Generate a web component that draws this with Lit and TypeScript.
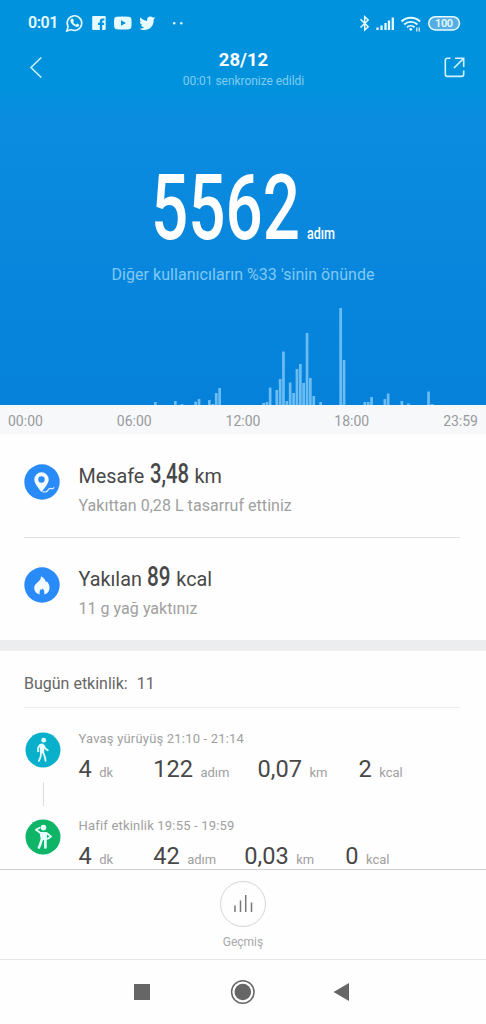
import { LitElement, html, css, svg } from 'lit';
import { customElement, property } from 'lit/decorators.js';

// [x, height] of each ten-minute slot that has steps
const STEP_BARS: [number, number][] = [
  [154, 3], [174, 4], [180.7, 1], [194.3, 3.3], [197.7, 6], [208, 5],
  [211.5, 1], [214.9, 12], [218.3, 17], [262.3, 2], [265.6, 3], [268.8, 17.5],
  [275.4, 15], [278.8, 26], [282.1, 53.5], [285.5, 4], [288.8, 22.5],
  [292.2, 12], [295.6, 36], [299, 41], [302.3, 22], [305.7, 72], [309, 27],
  [312.4, 9], [319.3, 3], [339.3, 97], [342.7, 45], [363.5, 3], [366.9, 3],
  [370.2, 8], [383.5, 6], [386.8, 11.5], [400.5, 4], [407, 1.5],
  [427.2, 13.5], [430.7, 1],
];

interface Activity {
  kind: 'walk' | 'light';
  title: string;
  values: [string, string][];
}

const ACTIVITIES: Activity[] = [
  {
    kind: 'walk',
    title: 'Yavaş yürüyüş 21:10 - 21:14',
    values: [['4', 'dk'], ['122', 'adım'], ['0,07', 'km'], ['2', 'kcal']],
  },
  {
    kind: 'light',
    title: 'Hafif etkinlik 19:55 - 19:59',
    values: [['4', 'dk'], ['42', 'adım'], ['0,03', 'km'], ['0', 'kcal']],
  },
];

@customElement('condensed-text')
export class CondensedText extends LitElement {
  @property() text = '';
  @property({ type: Number }) size = 27;
  @property({ type: Number }) width = 40;

  static styles = css`
    :host {
      display: inline-block;
      line-height: 0;
    }

    svg {
      display: block;
      overflow: visible;
    }

    text {
      font-family: Roboto, 'Liberation Sans', sans-serif;
      fill: currentColor;
    }
  `;

  render() {
    const cap = Math.round(this.size * 0.711);
    return html`
      <svg width=${this.width} height=${cap}>
        <text
          x="0"
          y=${cap}
          font-size=${this.size}
          textLength=${this.width}
          lengthAdjust="spacingAndGlyphs"
        >${this.text}</text>
      </svg>
    `;
  }
}

@customElement('status-bar')
export class StatusBar extends LitElement {
  static styles = css`
    :host {
      display: flex;
      justify-content: space-between;
      height: 46px;
      padding: 0 25px 0 28px;
      color: #e6fbff;
      font-family: Roboto, sans-serif;
      font-weight: 600;
    }

    .side {
      display: flex;
      align-items: center;
    }

    .time {
      width: 37px;
      font-size: 16px;
      line-height: 46px;
      letter-spacing: -0.5px;
    }

    svg {
      display: block;
    }
  `;

  render() {
    return html`
      <div class="side">
        <span class="time">0:01</span>
        <svg width="122" height="24" viewBox="65 11 122 24" fill="currentColor">
          <path
            d="M66.8 31.1l1.3-4.4a7.3 7.3 0 1 1 3 2.9z"
            fill="none"
            stroke="currentColor"
            stroke-width="1.6"
          />
          <path d="M71.4 18.8l1.4-.2 1.2 2.4-.8 1.2c.7 1.3 1.6 2 2.7 2.5l1.2-1.1 2.2 1.1c.1 1.5-1.2 2.2-2.3 2.2-3.4-.5-6.6-3.7-6.7-6.3 0-.8.5-1.4 1.1-1.8z" />
          <path
            fill-rule="evenodd"
            d="M93.2 16h11.5q1 0 1 1v12q0 1-1 1h-2.5v-5h1.7l.3-2.2h-2v-1.3q0-1 1.1-1h1.1v-2.1h-1.9q-2.7 0-2.7 2.9v1.5h-1.8v2.2h1.8v5h-6.6q-1 0-1-1v-12q0-1 1-1z"
          />
          <path
            fill-rule="evenodd"
            d="M116.5 16.8q6.3-.5 12.6 0q2.2.2 2.3 2.3q.4 3.9 0 7.8q-.2 2-2.3 2.3q-6.3.6-12.6 0q-2.1-.2-2.3-2.3q-.4-3.9 0-7.8q.1-2.1 2.3-2.3zM121 20.2v5.6l5-2.8z"
          />
          <path d="M155.2 17.6l-1.5 2c.2 6.5-4.2 10.5-9.3 10.5-1.9 0-3.7-.5-5.1-1.5 1.9.2 3.6-.3 4.9-1.3-1.5 0-2.7-1-3.1-2.3h1.4c-1.6-.4-2.6-1.7-2.6-3.4l1.4.4c-1.4-1.1-1.8-2.9-.9-4.5 1.7 2 4 3.2 6.7 3.4-.5-2.5 1-4.4 3.2-4.4.9 0 1.8.4 2.4 1z" />
          <circle cx="174.2" cy="23.2" r="1.2" />
          <circle cx="181.3" cy="23.2" r="1.2" />
        </svg>
      </div>
      <div class="side">
        <svg width="102" height="24" viewBox="359 11 102 24" fill="none" stroke="currentColor">
          <path d="M360.5 19.3l7.7 7.5-3.5 3.2v-13.2l3.5 3.2-7.7 7.5" stroke-width="1.5" />
          <path
            d="M377.5 30v-2.5M381.5 30v-4.5M385.5 30v-7M389 30v-9.5M392.8 30v-12.5"
            stroke-width="2.3"
          />
          <path
            d="M401.5 21.5a13.5 13.5 0 0 1 18.6 0M404.2 24.5a9.5 9.5 0 0 1 13.2 0M407 27.3a5.7 5.7 0 0 1 7.6 0"
            stroke-width="1.9"
          />
          <circle cx="410.8" cy="29.3" r="1.4" fill="currentColor" stroke="none" />
          <path d="M416.8 27.5v4M419.2 27.5v4" stroke-width="1.2" />
          <rect x="428.7" y="16.7" width="30.8" height="13.2" rx="6.6" fill="#56ade4" stroke-width="1.5" />
          <text x="444.1" y="27.3" fill="currentColor" stroke="none" font-size="11" text-anchor="middle" textLength="18">100</text>
        </svg>
      </div>
    `;
  }
}

@customElement('step-hero')
export class StepHero extends LitElement {
  static styles = css`
    :host {
      display: flex;
      flex-direction: column;
      height: 405px;
      background: linear-gradient(#0092dc 0, #0092dc 85px, #0b8ce0 120px, #0581da 405px);
      color: #fff;
      font-family: Roboto, sans-serif;
    }

    .bar {
      display: flex;
      justify-content: space-between;
      height: 50px;
      padding: 0 20px 0 29px;
    }

    .bar svg {
      margin-top: 10px;
    }

    .titles {
      padding-top: 1px;
      text-align: center;
    }

    .date {
      font-size: 18.5px;
      font-weight: 700;
      line-height: 26px;
    }

    .sync {
      font-size: 12px;
      line-height: 16px;
      letter-spacing: -0.04px;
      color: #80cdf1;
    }

    .steps {
      display: flex;
      align-items: flex-end;
      gap: 7px;
      height: 143px;
      padding-left: 151px;
      font-weight: 500;
    }

    .rank {
      margin-top: 24px;
      text-align: center;
      font-size: 16px;
      line-height: 24px;
      letter-spacing: 0.05px;
      color: #80c9f4;
    }

    .chart {
      display: block;
      margin-top: auto;
      fill: #6abcf2;
    }
  `;

  render() {
    return html`
      <status-bar></status-bar>
      <div class="bar">
        <svg width="14" height="24" fill="none" stroke="#d2f3fc" stroke-width="1.5">
          <path d="M12.3 1.5L2 11.5l10.3 10" />
        </svg>
        <div class="titles">
          <div class="date">28/12</div>
          <div class="sync">00:01 senkronize edildi</div>
        </div>
        <svg width="22" height="24" fill="none" stroke="#d2f3fc" stroke-width="1.6">
          <path d="M6.5 2.3H3.5Q1.3 2.3 1.3 4.5v13.7q0 2.2 2.2 2.2h14q2.2 0 2.2-2.2V14.5" />
          <path d="M11 2.3h8.7V11M19.5 2.5L10 12" />
        </svg>
      </div>
      <div class="steps">
        <condensed-text text="5562" size="91" width="149"></condensed-text>
        <condensed-text text="adım" size="17" width="28"></condensed-text>
      </div>
      <div class="rank">Diğer kullanıcıların %33 'sinin önünde</div>
      <svg class="chart" width="486" height="98">
        ${STEP_BARS.map(([x, h]) => svg`<rect x=${x} y=${98 - h} width="2.7" height=${h} />`)}
      </svg>
    `;
  }
}

@customElement('activity-item')
export class ActivityItem extends LitElement {
  @property({ attribute: false }) activity!: Activity;

  static styles = css`
    :host {
      display: flex;
      height: 86.5px;
      font-family: Roboto, sans-serif;
    }

    .rail {
      display: flex;
      flex-direction: column;
      align-items: center;
      gap: 14px;
      width: 36px;
      margin-left: 25px;
      padding-top: 1px;
    }

    .rail svg {
      flex: none;
    }

    .link {
      width: 1px;
      height: 24px;
      background: #dcdcdc;
    }

    .body {
      padding-left: 17.5px;
    }

    .title {
      font-size: 13px;
      line-height: 16px;
      color: #a0a0a0;
      letter-spacing: 0.19px;
    }

    .values {
      display: flex;
      height: 42px;
      line-height: 42px;
      margin-top: 1px;
    }

    .value {
      white-space: nowrap;
      margin-right: 40px;
    }

    .value:nth-child(2) {
      margin-right: 28px;
    }

    .value:nth-child(3) {
      margin-right: 31px;
    }

    .number {
      font-size: 23.6px;
      color: #484848;
      margin-right: 7.5px;
    }

    .unit {
      font-size: 13px;
      color: #a0a0a0;
    }
  `;

  private _icon() {
    if (this.activity.kind === 'walk') {
      return svg`
        <circle cx="18" cy="18" r="17.5" fill="#08b0cb" stroke="none" />
        <circle cx="18.7" cy="8.2" r="2.4" fill="#e8ffff" stroke="none" />
        <path d="M17 13.8v5.4" stroke-width="4.4" />
        <path d="M15.2 12.7l-2.2 3.3v3.3M18.8 13.7l1.7 3 2.3 1.5M16 20.5l-.3 4-1.8 4.3M18.3 20.5l1.4 4 .9 4.3" stroke-width="1.8" />
      `;
    }
    return svg`
      <circle cx="18" cy="18" r="17.5" fill="#0eb566" stroke="none" />
      <circle cx="18.5" cy="8.6" r="2.8" fill="#e8ffff" stroke="none" />
      <path d="M15.7 14h5.3v6h-4.3z" fill="#e8ffff" stroke-width="2" />
      <path d="M15.5 14l-4.6-3.2 3.8-2.1M21.5 14l4.5 3.5-3.2 2.2" stroke-width="1.8" />
      <path d="M16.6 21l-1.2 4-1.5 3.5M20.4 21v7.5" stroke-width="2.6" />
    `;
  }

  render() {
    return html`
      <div class="rail">
        <svg width="36" height="36" fill="none" stroke="#e8ffff" stroke-linecap="round" stroke-linejoin="round">
          ${this._icon()}
        </svg>
        <div class="link"></div>
      </div>
      <div class="body">
        <div class="title">${this.activity.title}</div>
        <div class="values">
          ${this.activity.values.map(
            ([value, unit]) => html`
              <div class="value"><span class="number">${value}</span><span class="unit">${unit}</span></div>
            `
          )}
        </div>
      </div>
    `;
  }
}

@customElement('app-root')
export class AppRoot extends LitElement {
  static styles = css`
    :host {
      display: flex;
      flex-direction: column;
      height: 1024px;
      overflow: hidden;
      background: #fefefe;
      font-family: Roboto, sans-serif;
      color: #484848;
    }

    svg {
      display: block;
      flex: none;
    }

    .axis {
      display: flex;
      justify-content: space-between;
      flex: none;
      height: 29px;
      padding: 0 8px;
      background: #f6f8fa;
      color: #999b9e;
      font-size: 14px;
      line-height: 32px;
    }

    .stats {
      padding: 0 26px 0 24px;
    }

    .stat {
      display: flex;
      gap: 18.5px;
      height: 102px;
      padding-top: 1px;
    }

    .stat + .stat {
      padding-top: 0;
      border-top: 1px solid #e2e2e2;
    }

    .stat svg {
      margin-top: 29px;
    }

    .headline {
      display: flex;
      align-items: baseline;
      gap: 5.5px;
      margin-top: 26px;
      height: 32px;
      font-size: 19.8px;
      line-height: 32px;
    }

    .headline condensed-text {
      font-weight: 500;
    }

    .note {
      margin-top: 1px;
      font-size: 16px;
      line-height: 24px;
      letter-spacing: 0.04px;
      color: #a0a0a0;
    }

    .divider {
      flex: none;
      height: 11px;
      background: #ecedef;
    }

    .count {
      flex: none;
      display: flex;
      gap: 9px;
      height: 56px;
      margin: 0 26px 0 24px;
      border-bottom: 1px solid #ebebeb;
      font-size: 16px;
      line-height: 66px;
      color: #666;
    }

    .activities {
      flex: 1;
      min-height: 0;
      overflow: hidden;
      padding-top: 23px;
    }

    .history {
      flex: none;
      display: flex;
      flex-direction: column;
      align-items: center;
      height: 78px;
      padding-top: 11px;
      border-top: 1px solid #d2d2d2;
      font-size: 12px;
      line-height: 31px;
      color: #a8a8a8;
    }

    .nav {
      flex: none;
      height: 64px;
      border-top: 1px solid #e6e6e6;
    }
  `;

  render() {
    return html`
      <step-hero></step-hero>
      <div class="axis">
        <span>00:00</span><span>06:00</span><span>12:00</span><span>18:00</span><span>23:59</span>
      </div>
      <div class="stats">
        <div class="stat">
          <svg width="36" height="36">
            <circle cx="18" cy="18" r="17.7" fill="#298bf8" />
            <path
              fill="#f4fbff"
              fill-rule="evenodd"
              d="M17.5 28C13.5 23 10.3 19.3 10.3 15.5a7.2 7.2 0 0 1 14.4 0c0 3.8-3.2 7.5-7.2 12.5zM17.5 12.3a3.2 3.2 0 1 0 0 6.4 3.2 3.2 0 0 0 0-6.4z"
            />
            <path
              d="M18.5 27.7c3 .8 4.5 0 5.5-1.6s1.8-2.2 3-1.5 2.3-.1 3.2-1.2"
              fill="none"
              stroke="#e3f3ff"
              stroke-width="1.2"
            />
          </svg>
          <div>
            <div class="headline">
              <span>Mesafe</span>
              <condensed-text text="3,48" size="27" width="39"></condensed-text>
              <span>km</span>
            </div>
            <div class="note">Yakıttan 0,28 L tasarruf ettiniz</div>
          </div>
        </div>
        <div class="stat">
          <svg width="36" height="36">
            <circle cx="18" cy="18" r="17.7" fill="#298bf8" />
            <path
              fill="#f4fbff"
              d="M17 9.2c3 1.8 4.5 3.6 5 6.3l.9-1.2c1.9 2.4 2.9 4.7 2.6 7.1-.3 3.2-2.5 5.4-5.3 6.2.5-2.3 0-4.3-1.5-6l-1 1.5-.8-1.1c-1.3 1.6-1.7 3.4-1.2 5.5-3.4-.8-5.5-3.1-5.5-6.4 0-2.6 1.5-4 3.5-5.8 2-1.7 3.3-3.4 3.3-6.1z"
            />
          </svg>
          <div>
            <div class="headline">
              <span>Yakılan</span>
              <condensed-text text="89" size="27" width="23.5"></condensed-text>
              <span>kcal</span>
            </div>
            <div class="note">11 g yağ yaktınız</div>
          </div>
        </div>
      </div>
      <div class="divider"></div>
      <div class="count"><span>Bugün etkinlik:</span><span>11</span></div>
      <div class="activities">
        ${ACTIVITIES.map((a) => html`<activity-item .activity=${a}></activity-item>`)}
      </div>
      <div class="history">
        <svg width="46" height="46" fill="none">
          <circle cx="23" cy="23" r="22.5" stroke="#d4d4d4" />
          <path d="M15 31v-6.5M20.5 31V19.5M25.7 31V14M31.5 31v-9.5" stroke="#777" stroke-width="1.5" />
        </svg>
        <span>Geçmiş</span>
      </div>
      <div class="nav">
        <svg width="486" height="64" fill="#666">
          <rect x="134" y="24" width="16" height="16" />
          <circle cx="242.8" cy="32" r="11.2" fill="none" stroke="#666" stroke-width="1.5" />
          <circle cx="242.8" cy="32" r="8.3" />
          <path d="M333.5 32l15.5-9v18z" />
        </svg>
      </div>
    `;
  }
}

declare global {
  interface HTMLElementTagNameMap {
    'app-root': AppRoot;
    'status-bar': StatusBar;
    'step-hero': StepHero;
    'activity-item': ActivityItem;
    'condensed-text': CondensedText;
  }
}
